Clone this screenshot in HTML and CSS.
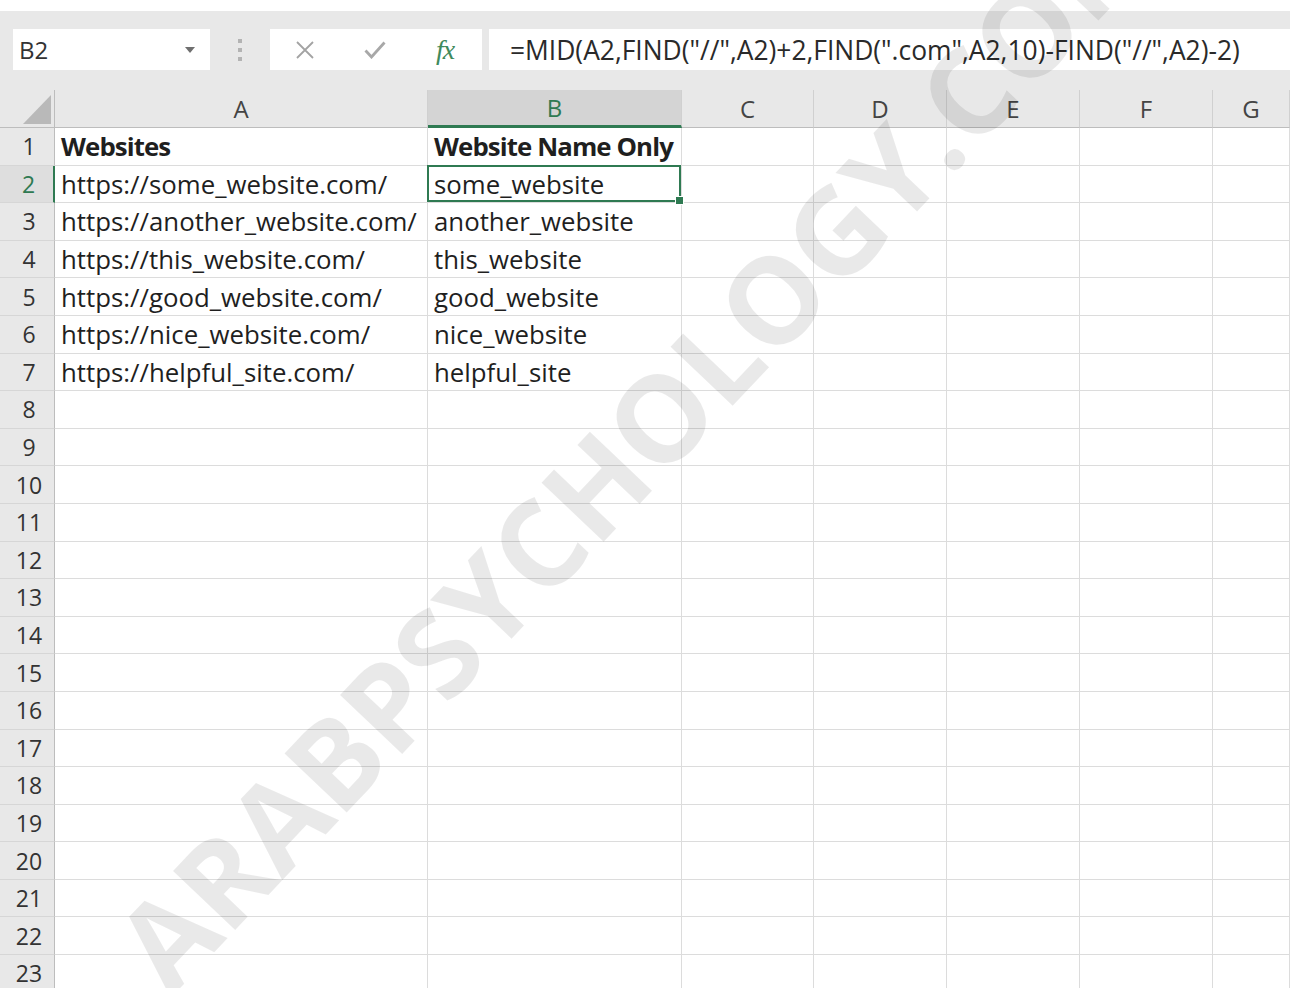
FILE: index.html
```html
<!DOCTYPE html>
<html lang="en">
<head>
<meta charset="utf-8">
<title>Book1 - Excel</title>
<link rel="stylesheet" href="styles.css">
</head>
<body>
<div class="app">
  <div class="toolbar">
    <div class="namebox">
      <span>B2</span>
      <svg class="caret" width="10" height="6" viewBox="0 0 10 6"><path d="M0 0h10L5 6z" fill="#6f6f6f"/></svg>
    </div>
    <div class="grip"><i></i><i></i><i></i></div>
    <div class="fxbox">
      <span class="fxbtn">
        <svg width="20" height="20" viewBox="0 0 20 20"><path d="M2 2l16 16M18 2L2 18" stroke="#a3a3a3" stroke-width="1.8" fill="none"/></svg>
      </span>
      <span class="fxbtn">
        <svg width="22" height="18" viewBox="0 0 22 18"><path d="M1.5 9.5l6 6.5L20.5 1.5" stroke="#a8a8a8" stroke-width="2.8" fill="none"/></svg>
      </span>
      <span class="fxbtn fx">fx</span>
    </div>
    <div class="formula">=MID(A2,FIND("//",A2)+2,FIND(".com",A2,10)-FIND("//",A2)-2)</div>
  </div>

  <div class="sheet">
    <div class="corner"><svg width="28" height="29" viewBox="0 0 28 29"><path d="M0 29H28V0z" fill="#b9b9b9"/></svg></div>
    <div class="ch">A</div><div class="ch sel">B</div><div class="ch">C</div><div class="ch">D</div><div class="ch">E</div><div class="ch">F</div><div class="ch">G</div>

    <div class="rh">1</div><div class="c b">Websites</div><div class="c b">Website Name Only</div><div class="c"></div><div class="c"></div><div class="c"></div><div class="c"></div><div class="c"></div>
    <div class="rh sel">2</div><div class="c">https://some_website.com/</div><div class="c active">some_website</div><div class="c"></div><div class="c"></div><div class="c"></div><div class="c"></div><div class="c"></div>
    <div class="rh">3</div><div class="c">https://another_website.com/</div><div class="c">another_website</div><div class="c"></div><div class="c"></div><div class="c"></div><div class="c"></div><div class="c"></div>
    <div class="rh">4</div><div class="c">https://this_website.com/</div><div class="c">this_website</div><div class="c"></div><div class="c"></div><div class="c"></div><div class="c"></div><div class="c"></div>
    <div class="rh">5</div><div class="c">https://good_website.com/</div><div class="c">good_website</div><div class="c"></div><div class="c"></div><div class="c"></div><div class="c"></div><div class="c"></div>
    <div class="rh">6</div><div class="c">https://nice_website.com/</div><div class="c">nice_website</div><div class="c"></div><div class="c"></div><div class="c"></div><div class="c"></div><div class="c"></div>
    <div class="rh">7</div><div class="c">https://helpful_site.com/</div><div class="c">helpful_site</div><div class="c"></div><div class="c"></div><div class="c"></div><div class="c"></div><div class="c"></div>
    <div class="rh">8</div><div class="c"></div><div class="c"></div><div class="c"></div><div class="c"></div><div class="c"></div><div class="c"></div><div class="c"></div>
    <div class="rh">9</div><div class="c"></div><div class="c"></div><div class="c"></div><div class="c"></div><div class="c"></div><div class="c"></div><div class="c"></div>
    <div class="rh">10</div><div class="c"></div><div class="c"></div><div class="c"></div><div class="c"></div><div class="c"></div><div class="c"></div><div class="c"></div>
    <div class="rh">11</div><div class="c"></div><div class="c"></div><div class="c"></div><div class="c"></div><div class="c"></div><div class="c"></div><div class="c"></div>
    <div class="rh">12</div><div class="c"></div><div class="c"></div><div class="c"></div><div class="c"></div><div class="c"></div><div class="c"></div><div class="c"></div>
    <div class="rh">13</div><div class="c"></div><div class="c"></div><div class="c"></div><div class="c"></div><div class="c"></div><div class="c"></div><div class="c"></div>
    <div class="rh">14</div><div class="c"></div><div class="c"></div><div class="c"></div><div class="c"></div><div class="c"></div><div class="c"></div><div class="c"></div>
    <div class="rh">15</div><div class="c"></div><div class="c"></div><div class="c"></div><div class="c"></div><div class="c"></div><div class="c"></div><div class="c"></div>
    <div class="rh">16</div><div class="c"></div><div class="c"></div><div class="c"></div><div class="c"></div><div class="c"></div><div class="c"></div><div class="c"></div>
    <div class="rh">17</div><div class="c"></div><div class="c"></div><div class="c"></div><div class="c"></div><div class="c"></div><div class="c"></div><div class="c"></div>
    <div class="rh">18</div><div class="c"></div><div class="c"></div><div class="c"></div><div class="c"></div><div class="c"></div><div class="c"></div><div class="c"></div>
    <div class="rh">19</div><div class="c"></div><div class="c"></div><div class="c"></div><div class="c"></div><div class="c"></div><div class="c"></div><div class="c"></div>
    <div class="rh">20</div><div class="c"></div><div class="c"></div><div class="c"></div><div class="c"></div><div class="c"></div><div class="c"></div><div class="c"></div>
    <div class="rh">21</div><div class="c"></div><div class="c"></div><div class="c"></div><div class="c"></div><div class="c"></div><div class="c"></div><div class="c"></div>
    <div class="rh">22</div><div class="c"></div><div class="c"></div><div class="c"></div><div class="c"></div><div class="c"></div><div class="c"></div><div class="c"></div>
    <div class="rh">23</div><div class="c"></div><div class="c"></div><div class="c"></div><div class="c"></div><div class="c"></div><div class="c"></div><div class="c"></div>
  </div>

  <div class="watermark">ARABPSYCHOLOGY.COM</div>
</div>
</body>
</html>
```

FILE: styles.css
```css
* {
  box-sizing: border-box;
}

body {
  margin: 0;
  background: #ffffff;
  font-family: "Open Sans", "Liberation Sans", sans-serif;
  color: #1f1f1f;
}

.app {
  position: relative;
  width: 1290px;
  height: 988px;
  overflow: hidden;
}

/* formula bar strip */
.toolbar {
  margin-top: 11px;
  height: 79px;
  background: #e8e8e8;
  display: flex;
  align-items: flex-start;
  padding: 18px 0 0 13px;
}

.namebox {
  width: 197px;
  height: 41px;
  background: #ffffff;
  display: flex;
  align-items: center;
  justify-content: space-between;
  padding: 0 15px 0 6px;
  font-size: 24px;
  color: #333333;
}

.grip {
  width: 60px;
  height: 41px;
  display: flex;
  flex-direction: column;
  align-items: center;
  justify-content: center;
  gap: 5px;
}

.grip i {
  display: block;
  width: 4px;
  height: 4px;
  background: #b3b3b3;
}

.fxbox {
  width: 212px;
  height: 41px;
  background: #ffffff;
  display: flex;
  align-items: center;
}

.fxbtn {
  width: 70px;
  display: flex;
  justify-content: center;
  align-items: center;
}

.fx {
  font-family: "Liberation Serif", "DejaVu Serif", serif;
  font-style: italic;
  font-size: 28px;
  color: #3f8a5c;
  letter-spacing: -1px;
}

.formula {
  flex: 1;
  height: 41px;
  margin-left: 7px;
  background: #ffffff;
  padding-left: 21px;
  display: flex;
  align-items: center;
  font-size: 26.4px;
  color: #2a2a2a;
  white-space: nowrap;
  overflow: hidden;
}

/* worksheet grid */
.sheet {
  display: grid;
  grid-template-columns: 55px 373px 254px 132px 133px 133px 133px 1fr;
  grid-template-rows: 38px;
  grid-auto-rows: 37.6px;
}

.corner {
  background: #e8e8e8;
  border-right: 1px solid #bdbdbd;
  border-bottom: 1px solid #bdbdbd;
  display: flex;
  align-items: flex-end;
  justify-content: flex-end;
  padding: 0 3px 3px 0;
}

.ch {
  background: #e8e8e8;
  border-right: 1px solid #d0d0d0;
  border-bottom: 1px solid #bdbdbd;
  display: flex;
  align-items: center;
  justify-content: center;
  font-size: 24px;
  color: #444444;
}

.ch.sel {
  background: #d4d4d4;
  color: #2f7a52;
  border-bottom: 3px solid #2f7a52;
}

.rh {
  background: #e8e8e8;
  border-right: 1px solid #bdbdbd;
  border-bottom: 1px solid #d6d6d6;
  display: flex;
  align-items: center;
  justify-content: center;
  padding-left: 4px;
  font-size: 23px;
  color: #333333;
}

.rh.sel {
  background: #dedede;
  color: #2f7a52;
  border-right: 2px solid #2f7a52;
}

.c {
  border-right: 1px solid #dcdcdc;
  border-bottom: 1px solid #dcdcdc;
  display: flex;
  align-items: center;
  padding-left: 6px;
  font-size: 25.8px;
  white-space: nowrap;
}

.c.b {
  font-weight: 700;
  letter-spacing: -0.9px;
}

/* selected cell frame with fill handle */
.c.active {
  position: relative;
}

.c.active::after {
  content: "";
  position: absolute;
  left: -1px;
  top: -1px;
  right: 0;
  bottom: 0;
  border: 2px solid #2f7a52;
}

.c.active::before {
  content: "";
  position: absolute;
  right: -3px;
  bottom: -3px;
  width: 7px;
  height: 7px;
  background: #2f7a52;
  border: 1px solid #ffffff;
  z-index: 1;
}

.watermark {
  position: absolute;
  left: 636px;
  top: 440px;
  transform: translate(-50%, -50%) rotate(-46.5deg);
  font-size: 120px;
  font-weight: 700;
  color: rgba(0, 0, 0, 0.085);
  white-space: nowrap;
  pointer-events: none;
}
```
